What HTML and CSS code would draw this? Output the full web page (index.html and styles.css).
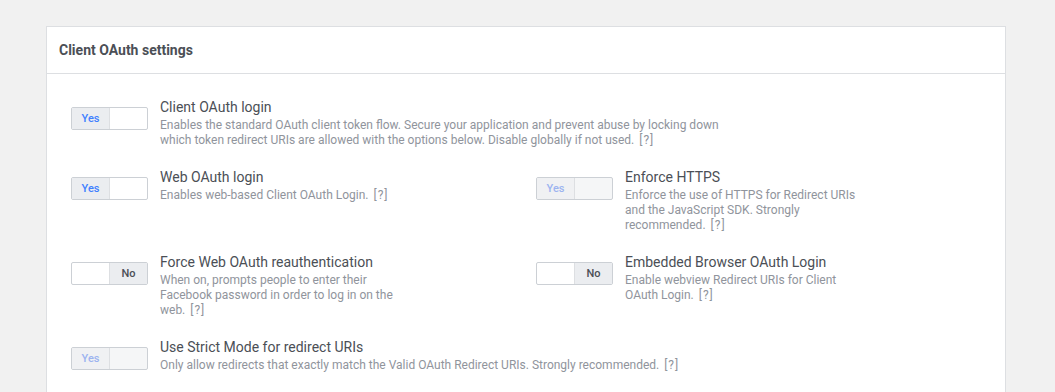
FILE: index.html
```html
<!DOCTYPE html>
<html lang="en">
<head>
  <meta charset="UTF-8">
  <meta name="viewport" content="width=device-width, initial-scale=1.0">
  <title>Client OAuth settings</title>
  <link rel="stylesheet" href="styles.css">
</head>
<body>
  <!-- Settings card -->
  <div class="card">
    <div class="card-header">Client OAuth settings</div>
    <div class="card-body">
      <div class="settings-grid">

        <div class="setting wide">
          <div class="toggle on"><span class="seg yes">Yes</span><span class="seg"></span></div>
          <div class="setting-text">
            <div class="setting-title">Client OAuth login</div>
            <div class="setting-desc">Enables the standard OAuth client token flow. Secure your application and prevent abuse by locking down which token redirect URIs are allowed with the options below. Disable globally if not used. <span class="help">[?]</span></div>
          </div>
        </div>

        <div class="setting">
          <div class="toggle on"><span class="seg yes">Yes</span><span class="seg"></span></div>
          <div class="setting-text">
            <div class="setting-title">Web OAuth login</div>
            <div class="setting-desc">Enables web-based Client OAuth Login. <span class="help">[?]</span></div>
          </div>
        </div>

        <div class="setting">
          <div class="toggle on disabled"><span class="seg yes">Yes</span><span class="seg"></span></div>
          <div class="setting-text">
            <div class="setting-title">Enforce HTTPS</div>
            <div class="setting-desc">Enforce the use of HTTPS for Redirect URIs and the JavaScript SDK. Strongly recommended. <span class="help">[?]</span></div>
          </div>
        </div>

        <div class="setting">
          <div class="toggle off"><span class="seg"></span><span class="seg no">No</span></div>
          <div class="setting-text">
            <div class="setting-title">Force Web OAuth reauthentication</div>
            <div class="setting-desc">When on, prompts people to enter their Facebook password in order to log in on the web. <span class="help">[?]</span></div>
          </div>
        </div>

        <div class="setting">
          <div class="toggle off"><span class="seg"></span><span class="seg no">No</span></div>
          <div class="setting-text">
            <div class="setting-title">Embedded Browser OAuth Login</div>
            <div class="setting-desc">Enable webview Redirect URIs for Client OAuth Login. <span class="help">[?]</span></div>
          </div>
        </div>

        <div class="setting wide">
          <div class="toggle on disabled"><span class="seg yes">Yes</span><span class="seg"></span></div>
          <div class="setting-text single">
            <div class="setting-title">Use Strict Mode for redirect URIs</div>
            <div class="setting-desc">Only allow redirects that exactly match the Valid OAuth Redirect URIs. Strongly recommended. <span class="help">[?]</span></div>
          </div>
        </div>

      </div>
    </div>
  </div>
</body>
</html>
```

FILE: styles.css
```css
/* General Styling */
body {
  font-family: Roboto, "Liberation Sans", Arial, sans-serif;
  margin: 0;
  background-color: #f1f1f1;
  color: #4b4f56;
}

/* Card */
.card {
  width: 958px;
  margin: 26px 0 0 46px;
  background-color: #ffffff;
  border: 1px solid #dddfe2;
  border-bottom: none;
  height: 366px;
}

.card-header {
  padding: 14px 12px 13px;
  font-size: 14px;
  font-weight: bold;
  line-height: 19px;
  color: #4b4f56;
  border-bottom: 1px solid #dddfe2;
}

.card-body {
  padding: 24px 24px 0;
}

/* Settings grid */
.settings-grid {
  display: grid;
  grid-template-columns: 465px 1fr;
  row-gap: 20px;
}

.setting {
  display: flex;
  align-items: flex-start;
}

.setting.wide {
  grid-column: 1 / 3;
}

.setting-text {
  margin-left: 12px;
  max-width: 240px;
}

.setting.wide .setting-text {
  max-width: 570px;
}

.setting.wide .setting-text.single {
  max-width: none;
  white-space: nowrap;
}

.setting-title {
  font-size: 14px;
  line-height: 18px;
  color: #4b4f56;
}

.setting-desc {
  margin-top: 2px;
  font-size: 12px;
  line-height: 15px;
  color: #90949c;
}

.help {
  margin-left: 2px;
  letter-spacing: 1px;
}

/* Toggle */
.toggle {
  display: flex;
  width: 75px;
  height: 21px;
  margin-top: 9px;
  border: 1px solid #ccd0d5;
  border-radius: 2px;
  overflow: hidden;
  flex-shrink: 0;
  background-color: #ffffff;
}

.toggle .seg {
  flex: 1;
  font-size: 11px;
  font-weight: 500;
  line-height: 21px;
  text-align: center;
}

.toggle .yes {
  flex: 0 0 37px;
  background-color: #ebedf0;
  border-right: 1px solid #dddfe2;
  color: #4080ff;
}

.toggle .no {
  flex: 0 0 37px;
  background-color: #ebedf0;
  border-left: 1px solid #dddfe2;
  color: #4b4f56;
}

.toggle.disabled {
  background-color: #f5f6f7;
}

.toggle.disabled .yes {
  background-color: #f0f1f3;
  color: #9cb4f0;
}
```
